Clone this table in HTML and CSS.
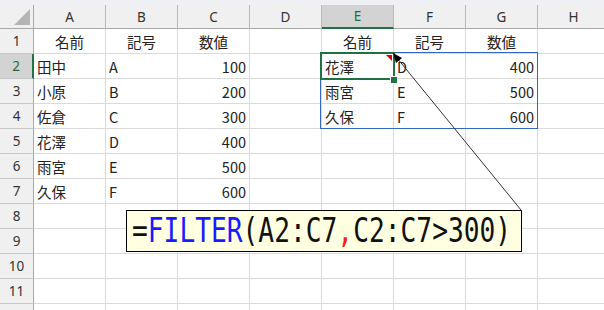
FILE: index.html
```html
<!DOCTYPE html>
<html lang="ja">
<head>
<meta charset="utf-8">
<link rel="stylesheet" href="styles.css">
</head>
<body>
<div class="sheet">
  <div class="strip"></div>
  <div class="row head">
    <div class="corner"><span class="tri"></span></div>
    <div class="ch">A</div><div class="ch">B</div><div class="ch">C</div><div class="ch">D</div>
    <div class="ch sel">E</div><div class="ch">F</div><div class="ch">G</div><div class="ch">H</div>
  </div>
  <div class="row">
    <div class="rh">1</div>
    <div class="c m">名前</div><div class="c m">記号</div><div class="c m">数値</div><div class="c"></div>
    <div class="c m">名前</div><div class="c m">記号</div><div class="c m">数値</div><div class="c"></div>
  </div>
  <div class="row">
    <div class="rh sel">2</div>
    <div class="c">田中</div><div class="c">A</div><div class="c r">100</div><div class="c"></div>
    <div class="c">花澤</div><div class="c">D</div><div class="c r">400</div><div class="c"></div>
  </div>
  <div class="row">
    <div class="rh">3</div>
    <div class="c">小原</div><div class="c">B</div><div class="c r">200</div><div class="c"></div>
    <div class="c">雨宮</div><div class="c">E</div><div class="c r">500</div><div class="c"></div>
  </div>
  <div class="row">
    <div class="rh">4</div>
    <div class="c">佐倉</div><div class="c">C</div><div class="c r">300</div><div class="c"></div>
    <div class="c">久保</div><div class="c">F</div><div class="c r">600</div><div class="c"></div>
  </div>
  <div class="row">
    <div class="rh">5</div>
    <div class="c">花澤</div><div class="c">D</div><div class="c r">400</div><div class="c"></div>
    <div class="c"></div><div class="c"></div><div class="c"></div><div class="c"></div>
  </div>
  <div class="row">
    <div class="rh">6</div>
    <div class="c">雨宮</div><div class="c">E</div><div class="c r">500</div><div class="c"></div>
    <div class="c"></div><div class="c"></div><div class="c"></div><div class="c"></div>
  </div>
  <div class="row">
    <div class="rh">7</div>
    <div class="c">久保</div><div class="c">F</div><div class="c r">600</div><div class="c"></div>
    <div class="c"></div><div class="c"></div><div class="c"></div><div class="c"></div>
  </div>
  <div class="row">
    <div class="rh">8</div>
    <div class="c"></div><div class="c"></div><div class="c"></div><div class="c"></div>
    <div class="c"></div><div class="c"></div><div class="c"></div><div class="c"></div>
  </div>
  <div class="row">
    <div class="rh">9</div>
    <div class="c"></div><div class="c"></div><div class="c"></div><div class="c"></div>
    <div class="c"></div><div class="c"></div><div class="c"></div><div class="c"></div>
  </div>
  <div class="row">
    <div class="rh">10</div>
    <div class="c"></div><div class="c"></div><div class="c"></div><div class="c"></div>
    <div class="c"></div><div class="c"></div><div class="c"></div><div class="c"></div>
  </div>
  <div class="row">
    <div class="rh">11</div>
    <div class="c"></div><div class="c"></div><div class="c"></div><div class="c"></div>
    <div class="c"></div><div class="c"></div><div class="c"></div><div class="c"></div>
  </div>
  <div class="row">
    <div class="rh"></div>
    <div class="c"></div><div class="c"></div><div class="c"></div><div class="c"></div>
    <div class="c"></div><div class="c"></div><div class="c"></div><div class="c"></div>
  </div>

  <div class="range"></div>
  <div class="selbox"></div>
  <div class="handle"></div>
  <svg class="overlay" width="604" height="310" viewBox="0 0 604 310">
    <polygon points="386,55 392,55 392,61" fill="#e00000"/>
    <line x1="397" y1="58" x2="521" y2="210" stroke="#333" stroke-width="1"/>
    <polygon points="393,53 402,58 396,63" fill="#000"/>
  </svg>
  <div class="tip"><span class="formula">=<span class="fn">FILTER</span>(A2:C7<span class="comma">,</span>C2:C7&gt;300)</span></div>
</div>
</body>
</html>
```
FILE: styles.css
```css
body {
  margin: 0;
  background: #fff;
}
.sheet {
  position: relative;
  width: 604px;
  height: 310px;
  overflow: hidden;
  font-family: "Noto Sans CJK JP", "Noto Sans", sans-serif;
}
.strip {
  height: 5px;
  background: #eef0f3;
}
.row {
  display: grid;
  grid-template-columns: 34px repeat(8, 72px);
  height: 25px;
}
.row.head {
  height: 24px;
}
.row > div {
  box-sizing: border-box;
  display: flex;
  align-items: center;
  overflow: hidden;
  white-space: nowrap;
}
.corner {
  position: relative;
  background: #f0f0f0;
  border-right: 1px solid #a8a8a8;
  border-bottom: 1px solid #a8a8a8;
}
.tri {
  position: absolute;
  left: 14px;
  top: 4px;
  width: 16px;
  height: 16px;
  background: #b4b4b4;
  clip-path: polygon(100% 0, 100% 100%, 0 100%);
}
.c {
  border-right: 1px solid #dadada;
  border-bottom: 1px solid #dadada;
  padding: 1px 3px 0 3px;
  font-size: 14.5px;
  color: #222;
}
.m { justify-content: center; }
.r { justify-content: flex-end; }
.ch {
  background: #f0f0f0;
  border-right: 1px solid #b8b8b8;
  border-bottom: 1px solid #a8a8a8;
  justify-content: center;
  font-family: "Noto Sans", sans-serif;
  font-size: 13.5px;
  color: #333;
}
.rh {
  background: #f0f0f0;
  border-right: 1px solid #a8a8a8;
  border-bottom: 1px solid #c8c8c8;
  justify-content: center;
  font-family: "Noto Sans", sans-serif;
  font-size: 13.5px;
  color: #333;
}
.sel {
  background: #d3d3d3;
  color: #1e6b3d;
}
.ch.sel {
  border-bottom: 2px solid #217346;
}
.rh.sel {
  border-right: 2px solid #217346;
}
.range {
  position: absolute;
  left: 320px;
  top: 52px;
  width: 218px;
  height: 77px;
  box-sizing: border-box;
  border: 1px solid #3566c2;
}
.selbox {
  position: absolute;
  left: 320px;
  top: 52px;
  width: 75px;
  height: 28px;
  box-sizing: border-box;
  border: 2px solid #1f7244;
}
.handle {
  position: absolute;
  left: 390px;
  top: 76px;
  width: 6px;
  height: 6px;
  background: #1f7244;
  border: 1px solid #fff;
}
.overlay {
  position: absolute;
  left: 0;
  top: 0;
}
.tip {
  position: absolute;
  left: 126px;
  top: 210px;
  width: 396px;
  height: 42px;
  box-sizing: border-box;
  border: 1px solid #000;
  background: #ffffe1;
  padding-left: 5px;
  display: flex;
  align-items: center;
}
.formula {
  display: inline-block;
  font-family: "DejaVu Sans Mono", monospace;
  font-size: 33px;
  line-height: 40px;
  color: #111;
  white-space: nowrap;
  transform: scaleX(0.795);
  transform-origin: left center;
}
.fn { color: #1a1aff; }
.comma { color: #ff1a1a; }
```
